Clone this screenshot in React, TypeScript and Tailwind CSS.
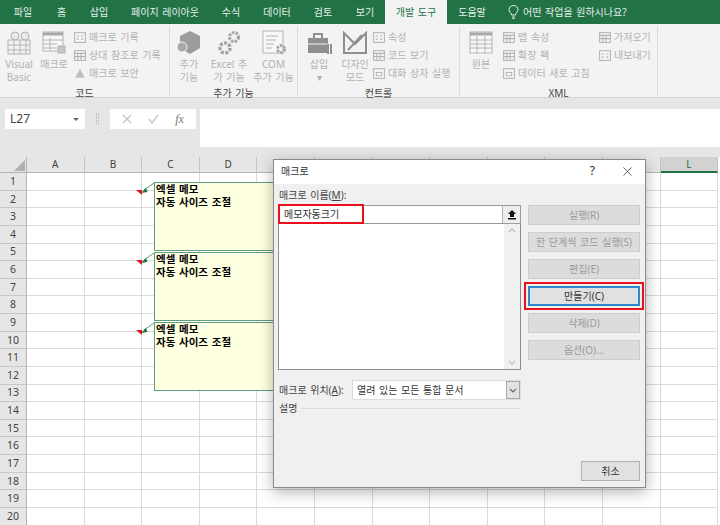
import { Fragment, type ReactNode } from "react";
import { X } from "lucide-react";

const tabs = [
  { label: "파일", width: "w-[46px]" },
  { label: "홈", width: "w-[31px]" },
  { label: "삽입", width: "w-[44px]" },
  { label: "페이지 레이아웃", width: "w-[88px]" },
  { label: "수식", width: "w-[44px]" },
  { label: "데이터", width: "w-[48px]" },
  { label: "검토", width: "w-[44px]" },
  { label: "보기", width: "w-[40px]" },
];

const columns = ["A", "B", "C", "D", "E", "F", "G", "H", "I", "J", "K", "L"];
const rows = Array.from({ length: 20 }, (_, i) => i + 1);

const dialogButtons = [
  { label: "실행(R)" },
  { label: "한 단계씩 코드 실행(S)" },
  { label: "편집(E)" },
  { label: "만들기(C)", active: true },
  { label: "삭제(D)" },
  { label: "옵션(O)..." },
];

function Icon({ size = 26, children }: { size?: number; children: ReactNode }) {
  return (
    <svg width={size} height={size} viewBox="0 0 26 26" fill="none" stroke="#b4b4b4" strokeWidth="1" className="shrink-0">
      {children}
    </svg>
  );
}

function LargeButton({ lines, width, icon }: { lines: string[]; width: string; icon: ReactNode }) {
  return (
    <div className={`flex flex-col items-center ${width}`}>
      <div className="flex h-[28px] items-center justify-center">{icon}</div>
      <div className="mt-[1px] text-center text-[10px] leading-[13px] text-[#b2b2b2]">
        {lines.map((line) => (
          <div key={line}>{line}</div>
        ))}
      </div>
    </div>
  );
}

function SmallButton({ label, icon }: { label: string; icon: ReactNode }) {
  return (
    <div className="flex h-[18px] items-center gap-[2px] whitespace-nowrap text-[10px] text-[#b2b2b2]">
      {icon}
      <span>{label}</span>
    </div>
  );
}

function SmallBox({ kind = 0 }: { kind?: number }) {
  return (
    <Icon size={14}>
      <rect x="3" y="5" width="20" height="18" fill="#f6f6f6" strokeWidth="2" />
      {kind === 0 && <path d="M7 11h4M7 17h4M15 11h4M15 17h4" strokeWidth="2" />}
      {kind === 1 && <path d="M3 10h20M9 10v13M15 10v13M3 16h20" strokeWidth="2" />}
      {kind === 2 && <path d="M8 12h10v6H8z" strokeWidth="2" />}
    </Icon>
  );
}

function RibbonGroup({ label, width, children }: { label: string; width: string; children: ReactNode }) {
  return (
    <div className={`relative flex flex-col border-r border-[#dcdcdc] ${width} h-[70px]`}>
      <div className="flex flex-1 items-start pt-[3px]">{children}</div>
      <div className="absolute bottom-[-4px] left-0 right-0 text-center text-[10px] leading-[13px] text-[#444]">{label}</div>
    </div>
  );
}

function Ribbon() {
  return (
    <div className="flex h-[74px] border-b border-[#d2d2d2] bg-[#f3f3f3] pt-[2px]">
      <RibbonGroup label="코드" width="w-[170px]">
        <LargeButton
          width="w-[38px]"
          lines={["Visual", "Basic"]}
          icon={
            <Icon>
              <rect x="2" y="10" width="22" height="14" fill="#f2f2f2" />
              <path d="M2 15h22M2 20h22M8 10v14M14 10v14M20 10v14" />
              <circle cx="9" cy="6" r="4" fill="#e8e8e8" />
              <circle cx="19" cy="6" r="4" fill="#e8e8e8" />
            </Icon>
          }
        />
        <LargeButton
          width="w-[32px]"
          lines={["매크로"]}
          icon={
            <Icon>
              <rect x="2" y="2" width="20" height="19" fill="#f7f7f7" />
              <path d="M2 4h20" stroke="#a8a8a8" strokeWidth="3" />
              <path d="M2 10h20M2 14h14M2 18h14M9 8v12" />
              <rect x="17" y="16" width="7" height="7" fill="#c4c4c4" />
            </Icon>
          }
        />
        <div className="ml-[3px] -mt-[1px] flex flex-col">
          <SmallButton label="매크로 기록" icon={<SmallBox />} />
          <SmallButton label="상대 참조로 기록" icon={<SmallBox kind={1} />} />
          <SmallButton
            label="매크로 보안"
            icon={
              <Icon size={14}>
                <path d="M13 5l9 17H4z" fill="#bdbdbd" stroke="none" />
              </Icon>
            }
          />
        </div>
      </RibbonGroup>

      <RibbonGroup label="추가 기능" width="w-[128px]">
        <LargeButton
          width="w-[38px]"
          lines={["추가", "기능"]}
          icon={
            <Icon>
              <path d="M14 1l10 5v12l-10 6-10-6V6z" fill="#9c9c9c" stroke="none" />
              <circle cx="6" cy="17" r="5" fill="#a8a8a8" stroke="#f3f3f3" />
            </Icon>
          }
        />
        <LargeButton
          width="w-[42px]"
          lines={["Excel 추", "가 기능"]}
          icon={
            <Icon>
              <circle cx="18" cy="7" r="4.5" stroke="#a4a4a4" strokeWidth="3" strokeDasharray="2.5 1.2" />
              <circle cx="9" cy="18" r="5" stroke="#a4a4a4" strokeWidth="3.5" strokeDasharray="3 1.4" />
            </Icon>
          }
        />
        <LargeButton
          width="w-[47px]"
          lines={["COM", "추가 기능"]}
          icon={
            <Icon>
              <rect x="2" y="1" width="20" height="22" fill="#f8f8f8" />
              <path d="M5 6h12M5 10h10M5 14h8M5 18h6" />
              <circle cx="20" cy="19" r="3.5" stroke="#a4a4a4" strokeWidth="3" strokeDasharray="2.5 1.2" />
            </Icon>
          }
        />
      </RibbonGroup>

      <RibbonGroup label="컨트롤" width="w-[162px]">
        <LargeButton
          width="w-[42px]"
          lines={["삽입", "▾"]}
          icon={
            <Icon>
              <rect x="2" y="8" width="20" height="15" fill="#8f8f8f" stroke="none" />
              <path d="M8 8V4h8v4" stroke="#8f8f8f" strokeWidth="2" />
              <path d="M2 14h20" stroke="#f3f3f3" />
              <path d="M22 14v10M25 14v10" stroke="#8f8f8f" strokeWidth="2" />
            </Icon>
          }
        />
        <LargeButton
          width="w-[30px]"
          lines={["디자인", "모드"]}
          icon={
            <Icon>
              <path d="M2 3l11 11L24 3v20H2z" fill="#f3f3f3" stroke="#8f8f8f" strokeWidth="2" />
              <path d="M6 20l14-15" stroke="#8f8f8f" strokeWidth="2" />
            </Icon>
          }
        />
        <div className="ml-[2px] -mt-[1px] flex flex-col">
          <SmallButton label="속성" icon={<SmallBox />} />
          <SmallButton label="코드 보기" icon={<SmallBox kind={1} />} />
          <SmallButton label="대화 상자 실행" icon={<SmallBox kind={2} />} />
        </div>
      </RibbonGroup>

      <RibbonGroup label="XML" width="w-[198px]">
        <LargeButton
          width="w-[42px]"
          lines={["원본"]}
          icon={
            <Icon>
              <rect x="2" y="2" width="22" height="21" fill="#f8f8f8" />
              <path d="M2 4h22" stroke="#a8a8a8" strokeWidth="3" />
              <path d="M2 10h22M2 14h22M2 18h22M9 6v17M17 6v17" />
            </Icon>
          }
        />
        <div className="-mt-[1px] flex w-[96px] flex-col">
          <SmallButton label="맵 속성" icon={<SmallBox kind={1} />} />
          <SmallButton label="확장 팩" icon={<SmallBox kind={1} />} />
          <SmallButton label="데이터 새로 고침" icon={<SmallBox kind={2} />} />
        </div>
        <div className="-mt-[1px] flex flex-col">
          <SmallButton label="가져오기" icon={<SmallBox kind={1} />} />
          <SmallButton label="내보내기" icon={<SmallBox />} />
        </div>
      </RibbonGroup>
    </div>
  );
}

function FormulaBar() {
  return (
    <div className="flex h-[59px] bg-[#e6e6e6] pt-[11px]">
      <div className="ml-[5px] flex h-[20px] w-[80px] items-center justify-between bg-white pl-[5px] pr-[6px] text-[12px] text-[#444]">
        <span>L27</span>
        <span className="h-0 w-0 border-x-[3px] border-t-[3px] border-x-transparent border-t-[#666]" />
      </div>
      <div className="ml-[11px] mt-[4px] h-[12px] w-[3px] border-x border-dotted border-[#bbb]" />
      <div className="ml-[11px] flex h-[20px] w-[86px] items-center justify-around bg-white px-[4px] text-[#c0c0c0]">
        <svg width="10" height="10" viewBox="0 0 10 10" stroke="#c4c4c4" strokeWidth="1.3">
          <path d="M1 1l8 8M9 1l-8 8" />
        </svg>
        <svg width="11" height="10" viewBox="0 0 11 10" fill="none" stroke="#c4c4c4" strokeWidth="1.3">
          <path d="M1 5l3 4 6-8" />
        </svg>
        <span className="font-['Liberation_Serif',serif] text-[12px] italic text-[#777]">fx</span>
      </div>
      <div className="ml-[4px] h-[38px] flex-1 bg-white" />
    </div>
  );
}

function Sheet() {
  return (
    <div className="grid grid-cols-[27px_repeat(12,57.6px)] grid-rows-[16px_repeat(20,17.63px)]">
      <div className="flex items-end justify-end border-r border-b border-[#b5b5b5] bg-[#e6e6e6] pb-[1px] pr-[1px]">
        <div className="h-0 w-0 border-b-[11px] border-l-[11px] border-b-[#b0b0b0] border-l-transparent" />
      </div>
      {columns.map((col) => (
        <div
          key={col}
          className={`flex items-center justify-center border-r border-[#c4c4c4] text-[10px] ${
            col === "L"
              ? "border-b-2 border-b-[#217346] bg-[#d2d2d2] text-[#217346]"
              : "border-b border-b-[#b5b5b5] bg-[#e6e6e6] text-[#444]"
          }`}
        >
          {col}
        </div>
      ))}
      {rows.map((row) => (
        <Fragment key={row}>
          <div className="flex items-center justify-center border-r border-b border-r-[#b5b5b5] border-b-[#c8c8c8] bg-[#e6e6e6] pt-[1px] text-[10.5px] text-[#444]">
            {row}
          </div>
          {columns.map((col) => (
            <div key={col} className="border-r border-b border-[#dadada] bg-white" />
          ))}
        </Fragment>
      ))}
    </div>
  );
}

function Comment({ top }: { top: string }) {
  return (
    <div className={`absolute left-[136px] ${top} flex items-start`}>
      <svg width="18" height="14" viewBox="0 0 18 14" className="shrink-0">
        <path d="M18 1L8 8" stroke="#5b9a78" fill="none" />
        <path d="M5 11l5-5 1.5 4z" fill="#217346" />
        <path d="M0 8h6v5z" fill="#e0101a" />
      </svg>
      <div className="h-[69px] w-[200px] border border-[#5f9c7c] bg-[#ffffe1] pl-[1px] text-[10.5px] font-bold leading-[12.5px] text-black [word-spacing:1px]">
        <div>엑셀 메모</div>
        <div>자동 사이즈 조절</div>
      </div>
    </div>
  );
}

function DialogButton({ label, active }: { label: string; active?: boolean }) {
  return (
    <div
      className={`flex h-[20px] w-[112px] items-center justify-center text-[10px] ${
        active
          ? "bg-[#e1e1e1] text-[#333] outline-2 outline-offset-[2px] outline-[#e8101a] border-2 border-[#2f86c9]"
          : "border border-[#cdcdcd] bg-[#dcdcdc] text-[#9a9a9a]"
      }`}
    >
      {label}
    </div>
  );
}

function MacroDialog() {
  return (
    <div className="absolute left-[273px] top-[159px] z-10 flex h-[329px] w-[373px] flex-col border border-[#8a8a8a] bg-[#f0f0f0] shadow-[0_4px_14px_rgba(0,0,0,0.3)]">
      <div className="flex h-[24px] items-center justify-between bg-white pb-[2px] pl-[7px] pr-[10px] text-[10px] text-[#333]">
        <span>매크로</span>
        <div className="flex items-center gap-[25px] text-[12px]">
          <span>?</span>
          <X size={15} strokeWidth={1.2} color="#333" />
        </div>
      </div>
      <div className="flex flex-1 px-[4px]">
        <div className="flex w-[243px] flex-col">
          <div className="mt-[4px] h-[17px] pl-[1px] text-[10px] leading-[14px] text-[#444]">
            매크로 이름(<span className="underline">M</span>):
          </div>
          <div className="relative flex h-[19px] border border-[#9a9a9a] bg-white">
            <div className="flex-1 pl-[5px] text-[10px] leading-[16px] text-[#333]">메모자동크기</div>
            <div className="flex w-[18px] items-center justify-center border-l border-[#b5b5b5] bg-[#eeeeee] text-[10px] font-bold leading-none text-black">
              <svg width="10" height="10" viewBox="0 0 10 10" fill="#111">
                <path d="M5 0l4 4H7v3H3V4H1zM1 8h8v1.4H1z" />
              </svg>
            </div>
            <div className="absolute left-[-1px] top-[-2px] h-[20px] w-[86px] border-2 border-[#e8101a]" />
          </div>
          <div className="flex h-[146px] justify-end border-x border-b border-[#8c8c8c] bg-white">
            <div className="flex w-[16px] flex-col items-center justify-between bg-[#f0f0f0] py-[4px]">
              <svg width="8" height="5" viewBox="0 0 8 5" fill="none" stroke="#c0c0c0" strokeWidth="1.3">
                <path d="M1 4l3-3 3 3" />
              </svg>
              <svg width="8" height="5" viewBox="0 0 8 5" fill="none" stroke="#c0c0c0" strokeWidth="1.3">
                <path d="M1 1l3 3 3-3" />
              </svg>
            </div>
          </div>
          <div className="mt-[10px] flex h-[20px] items-center">
            <span className="w-[74px] whitespace-nowrap pl-[1px] text-[10px] text-[#444]">
              매크로 위치(<span className="underline">A</span>):
            </span>
            <div className="flex h-[20px] flex-1 items-center justify-between border border-[#dcdcdc] bg-white pl-[4px] text-[10px] text-[#333]">
              <span>열려 있는 모든 통합 문서</span>
              <div className="flex h-full w-[14px] items-center justify-center border border-[#a8a8a8] bg-[#e2e2e2]">
                <svg width="8" height="5" viewBox="0 0 8 5" fill="none" stroke="#666" strokeWidth="1.2">
                  <path d="M1 1l3 3 3-3" />
                </svg>
              </div>
            </div>
          </div>
          <div className="mt-[1px] flex items-center gap-[4px] pl-[1px] text-[10px] text-[#444]">
            <span>설명</span>
            <div className="h-px flex-1 bg-[#dcdcdc]" />
          </div>
        </div>
        <div className="ml-[7px] flex flex-1 flex-col pt-[21px]">
          <div className="flex flex-col gap-[7px]">
            {dialogButtons.map((button) => (
              <DialogButton key={button.label} label={button.label} active={button.active} />
            ))}
          </div>
          <div className="mt-auto mb-[6px] ml-[53px] flex h-[20px] w-[59px] items-center justify-center border border-[#b0b0b0] bg-[#e1e1e1] text-[10px] text-[#333]">
            취소
          </div>
        </div>
      </div>
    </div>
  );
}

export default function App() {
  return (
    <div className="relative h-[525px] w-[720px] overflow-hidden bg-white font-['Noto_Sans','Noto_Sans_CJK_KR',sans-serif] [word-spacing:1px]">
      <div className="flex h-[24px] items-end bg-[#217346] text-[10px] text-[#e4efe9]">
        {tabs.map((tab) => (
          <div key={tab.label} className={`flex h-[24px] items-center justify-center whitespace-nowrap ${tab.width}`}>
            {tab.label}
          </div>
        ))}
        <div className="flex h-[24px] w-[62px] items-center justify-center bg-[#f3f3f3] text-[#217346]">개발 도구</div>
        <div className="flex h-[24px] w-[50px] items-center justify-center">도움말</div>
        <div className="ml-[11px] flex h-[24px] items-center gap-[4px]">
          <svg width="11" height="14" viewBox="0 0 11 14" fill="none" stroke="#e4efe9" strokeWidth="1">
            <path d="M3.5 10C3.5 8 1 7 1 4.5a4.5 4 0 0 1 9 0C10 7 7.5 8 7.5 10zM4 12h3M4.5 13.5h2" />
          </svg>
          <span>어떤 작업을 원하시나요?</span>
        </div>
      </div>
      <Ribbon />
      <FormulaBar />
      <div className="relative">
        <Sheet />
        <Comment top="top-[25px]" />
        <Comment top="top-[95px]" />
        <Comment top="top-[165px]" />
      </div>
      <MacroDialog />
    </div>
  );
}
